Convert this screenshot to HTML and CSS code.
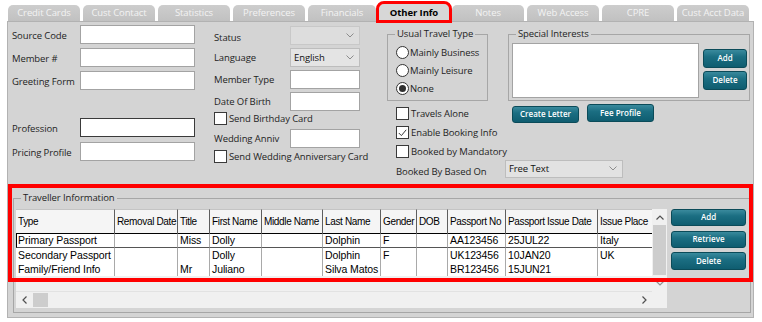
FILE: index.html
```html
<!DOCTYPE html>
<html>
<head>
<meta charset="utf-8">
<title>Other Info</title>
<link rel="stylesheet" href="styles.css">
</head>
<body>
<div class="app">
  <div class="tabs">
    <div class="tab">Credit Cards</div>
    <div class="tab">Cust Contact</div>
    <div class="tab">Statistics</div>
    <div class="tab">Preferences</div>
    <div class="tab narrow">Financials</div>
    <div class="tab active">Other Info</div>
    <div class="tab">Notes</div>
    <div class="tab">Web Access</div>
    <div class="tab">CPRE</div>
    <div class="tab">Cust Acct Data</div>
  </div>

  <div class="panel">
    <div class="upper">
      <div class="col-left">
        <div class="frow"><span class="lbl">Source Code</span><div class="inp"></div></div>
        <div class="frow"><span class="lbl">Member #</span><div class="inp"></div></div>
        <div class="frow"><span class="lbl">Greeting Form</span><div class="inp"></div></div>
        <div class="frow sep"><span class="lbl">Profession</span><div class="inp focus"></div></div>
        <div class="frow sep2"><span class="lbl">Pricing Profile</span><div class="inp"></div></div>
      </div>

      <div class="col-mid">
        <div class="mrow first"><span class="mlbl low">Status</span>
          <div class="sel disabled"><span></span><svg class="chev" width="8" height="5" viewBox="0 0 8 5"><polyline points="0.5,0.5 4,4 7.5,0.5" fill="none" stroke="#8c8c8c" stroke-width="1"/></svg></div>
        </div>
        <div class="mrow"><span class="mlbl">Language</span>
          <div class="sel"><span>English</span><svg class="chev" width="8" height="5" viewBox="0 0 8 5"><polyline points="0.5,0.5 4,4 7.5,0.5" fill="none" stroke="#8c8c8c" stroke-width="1"/></svg></div>
        </div>
        <div class="mrow"><span class="mlbl">Member Type</span><div class="inp small"></div></div>
        <div class="mrow"><span class="mlbl">Date Of Birth</span><div class="inp small"></div></div>
        <div class="crow c1"><span class="cb"></span>Send Birthday Card</div>
        <div class="mrow wed"><span class="mlbl">Wedding Anniv</span><div class="inp small"></div></div>
        <div class="crow c2"><span class="cb"></span>Send Wedding Anniversary Card</div>
      </div>

      <div class="col-right">
        <div class="fs-row">
          <fieldset class="grp utt">
            <legend>Usual Travel Type</legend>
            <div class="utt-body">
              <div class="rad"><span class="rb"></span>Mainly Business</div>
              <div class="rad"><span class="rb"></span>Mainly Leisure</div>
              <div class="rad"><span class="rb on"></span>None</div>
            </div>
          </fieldset>
          <fieldset class="grp si">
            <legend>Special Interests</legend>
            <div class="si-body">
              <div class="ta"></div>
              <div class="si-btns">
                <button class="btn si-add">Add</button>
                <button class="btn si-del">Delete</button>
              </div>
            </div>
          </fieldset>
        </div>
        <div class="rowA">
          <div class="checks">
            <div class="crow"><span class="cb"></span>Travels Alone</div>
            <div class="crow"><span class="cb"><svg width="9" height="8" viewBox="0 0 9 8"><polyline points="0.8,4 3.4,6.6 8.2,0.8" fill="none" stroke="#3a3a3a" stroke-width="1"/></svg></span>Enable Booking Info</div>
            <div class="crow"><span class="cb"></span>Booked by Mandatory</div>
          </div>
          <button class="btn create">Create Letter</button>
          <button class="btn fee">Fee Profile</button>
        </div>
        <div class="rowB">
          <span class="blbl">Booked By Based On</span>
          <div class="sel wide"><span>Free Text</span><svg class="chev" width="8" height="5" viewBox="0 0 8 5"><polyline points="0.5,0.5 4,4 7.5,0.5" fill="none" stroke="#8c8c8c" stroke-width="1"/></svg></div>
        </div>
      </div>
    </div>

    <fieldset class="grp trav">
      <legend>Traveller Information</legend>
      <div class="trav-body">
        <div class="grid">
          <div class="tarea">
            <table>
              <colgroup>
                <col class="w99"><col class="w63"><col class="w32"><col class="w52"><col class="w61"><col class="w58"><col class="w36"><col class="w31"><col class="w58"><col class="w92"><col class="w54">
              </colgroup>
              <thead>
                <tr><th>Type</th><th>Removal Date</th><th>Title</th><th>First Name</th><th>Middle Name</th><th>Last Name</th><th>Gender</th><th>DOB</th><th>Passport No</th><th>Passport Issue Date</th><th>Issue Place</th></tr>
              </thead>
              <tbody>
                <tr class="cur"><td>Primary Passport</td><td></td><td>Miss</td><td>Dolly</td><td></td><td>Dolphin</td><td>F</td><td></td><td>AA123456</td><td>25JUL22</td><td>Italy</td></tr>
                <tr><td>Secondary Passport</td><td></td><td></td><td>Dolly</td><td></td><td>Dolphin</td><td>F</td><td></td><td>UK123456</td><td>10JAN20</td><td>UK</td></tr>
                <tr><td>Family/Friend Info</td><td></td><td>Mr</td><td>Juliano</td><td></td><td>Silva Matos</td><td></td><td></td><td>BR123456</td><td>15JUN21</td><td></td></tr>
              </tbody>
            </table>
          </div>
          <div class="vsb">
            <div class="arr"><svg width="8" height="5" viewBox="0 0 8 5"><polyline points="0.5,4.5 4,1 7.5,4.5" fill="none" stroke="#505050" stroke-width="1.2"/></svg></div>
            <div class="vthumb"></div>
            <div class="arr"><svg width="8" height="5" viewBox="0 0 8 5"><polyline points="0.5,0.5 4,4 7.5,0.5" fill="none" stroke="#909090" stroke-width="1.2"/></svg></div>
          </div>
          <div class="hsb">
            <div class="harr"><svg width="5" height="8" viewBox="0 0 5 8"><polyline points="4.5,0.5 1,4 4.5,7.5" fill="none" stroke="#505050" stroke-width="1.2"/></svg></div>
            <div class="hthumb"></div>
            <div class="hspace"></div>
            <div class="harr"><svg width="5" height="8" viewBox="0 0 5 8"><polyline points="0.5,0.5 4,4 0.5,7.5" fill="none" stroke="#505050" stroke-width="1.2"/></svg></div>
          </div>
          <div class="corner"></div>
        </div>
        <div class="trav-btns">
          <button class="btn tb-add">Add</button>
          <button class="btn tb-ret">Retrieve</button>
          <button class="btn tb-del">Delete</button>
        </div>
      </div>
    </fieldset>
  </div>

  <div class="mark"></div>
</div>
</body>
</html>
```

FILE: styles.css
```css
* { box-sizing: border-box; }
html, body { margin: 0; background: #fff; }
body {
  font-family: "Open Sans", "Noto Sans", sans-serif;
  font-size: 9.5px;
  letter-spacing: -0.1px;
  color: #1e1e1e;
}
.app { position: relative; width: 762px; height: 322px; }

/* tabs */
.tabs { display: flex; gap: 3px; padding: 5px 0 0 8px; height: 21px; }
.tab {
  flex: none; width: 72px; height: 16px;
  background: linear-gradient(#cdcdcd, #c1c1c1);
  color: #f3f3f3;
  border-radius: 5px 5px 0 0;
  text-align: center; line-height: 16px; white-space: nowrap;
}
.tab.narrow { width: 68px; }
.tab.active {
  width: 70px; height: 16px; margin-top: -1px;
  background: #d7d7d7; color: #000; font-weight: 700; line-height: 17px;
  outline: 3px solid #ff0000;
}

/* panel */
.panel {
  margin-left: 7px; width: 747px; height: 297px;
  border: 1px solid #b2b2b2; background: #d4d4d4;
}
.upper { display: flex; height: 170px; padding: 3px 0 0 4px; }

.col-left { width: 183px; flex: none; }
.frow { display: flex; align-items: center; height: 19px; margin-bottom: 4px; }
.frow .lbl { width: 68px; flex: none; white-space: nowrap; padding-top: 1px; }
.frow.sep { margin-top: 28px; }
.frow.sep2 { margin-top: 5px; }
.inp { width: 115px; height: 19px; background: #fff; border: 1px solid #a3a3a3; }
.inp.focus { border-color: #3a3a3a; }
.inp.small { width: 70px; }

.col-mid { width: 154px; margin-left: 19px; flex: none; }
.mrow { display: flex; align-items: center; height: 19px; margin-top: 3px; }
.mrow.first { margin-top: 1px; }
.mrow.wed { margin-top: 4px; }
.mlbl { width: 76px; flex: none; white-space: nowrap; }
.mlbl.low { padding-top: 4px; }
.sel {
  width: 70px; height: 19px; flex: none;
  display: flex; align-items: center; justify-content: space-between;
  padding: 0 5px 0 3px;
  background: #e4e4e4; border: 1px solid #bdbdbd; color: #111;
}
.sel.disabled { background: #dddddd; border-color: #c8c8c8; }
.sel.wide { width: 118px; height: 18px; background: #e2e2e2; }
.chev { flex: none; }

.crow { display: flex; align-items: center; height: 13px; white-space: nowrap; }
.crow.c1 { margin-top: 1px; }
.crow.c2 { margin-top: 2px; }
.cb {
  width: 13px; height: 13px; flex: none; margin-right: 2px;
  border: 1px solid #3a3a3a; background: #fff;
  display: flex; align-items: center; justify-content: center;
}

.col-right { width: 362px; margin-left: 19px; flex: none; }
.fs-row { display: flex; gap: 20px; margin-top: 3px; }

fieldset.grp {
  margin: 0; padding: 0; min-width: 0;
  border: 1px solid #a6a6a6;
}
fieldset.grp legend {
  padding: 0 2px; margin-left: 7px;
  font-size: 9.5px; line-height: 12px; color: #1e1e1e; white-space: nowrap;
}
.utt { width: 101px; height: 73px; flex: none; }
.utt-body { padding: 6px 0 0 8px; }
.rad { display: flex; align-items: center; height: 13px; margin-bottom: 5px; white-space: nowrap; }
.rb {
  width: 13px; height: 13px; flex: none; margin-right: 1px;
  border: 1px solid #333; border-radius: 50%; background: #fff;
  display: flex; align-items: center; justify-content: center;
}
.rb.on::after { content: ""; width: 7px; height: 7px; border-radius: 50%; background: #2f2f2f; }

.si { width: 242px; height: 73px; flex: none; }
.si-body { display: flex; padding: 3px 0 0 3px; }
.ta { width: 187px; height: 55px; background: #fff; border: 1px solid #a3a3a3; flex: none; }
.si-btns { margin-left: 4px; }
.si-add { width: 44px; height: 19px; margin-top: 6px; }
.si-del { width: 44px; height: 19px; margin-top: 3px; }

.btn {
  display: flex; align-items: center; justify-content: center;
  padding: 0 0 1px; margin-left: 0; margin-right: 0;
  font-family: "Open Sans", "Noto Sans", sans-serif;
  font-size: 8px; font-weight: 600; color: #fff; line-height: 1; letter-spacing: 0;
  background: linear-gradient(#3a8a9d 0%, #1b6e82 40%, #0f5d70 100%);
  border: 1px solid #0b4b59; border-radius: 3px;
  white-space: nowrap;
}

.rowA { display: flex; align-items: flex-start; }
.checks { width: 116px; margin-left: 9px; padding-top: 6px; flex: none; }
.checks .crow { margin-bottom: 6px; }
.create { width: 67px; height: 17px; margin-top: 5px; }
.fee { width: 67px; height: 18px; margin-top: 3px; margin-left: 8px; }
.rowB { display: flex; align-items: center; margin: -5px 0 0 9px; }
.blbl { width: 109px; flex: none; padding-top: 6px; white-space: nowrap; }

/* traveller */
fieldset.trav { margin-left: 5px; width: 738px; height: 121px; }
.trav-body { display: flex; padding: 5px 0 0 2px; }
.grid {
  display: grid; flex: none;
  grid-template-columns: 636px 15px; grid-template-rows: 82px 17px;
  width: 651px; height: 99px; background: #f0f0f0;
}
.tarea { overflow: hidden; background: #f0f0f0; }
table {
  border-collapse: separate; border-spacing: 0; table-layout: fixed; width: 636px;
  font-family: "Liberation Sans", Arial, sans-serif; font-size: 10.5px; letter-spacing: -0.1px; color: #000;
}
.w99 { width: 99px; } .w63 { width: 63px; } .w32 { width: 32px; } .w52 { width: 52px; }
.w61 { width: 61px; } .w58 { width: 58px; } .w36 { width: 36px; } .w31 { width: 31px; }
.w92 { width: 92px; } .w54 { width: 54px; }
th {
  height: 24px; padding: 0 0 0 2px; text-align: left; font-weight: 400;
  font-size: 10px; letter-spacing: -0.35px;
  background: #f5f5f5; border-right: 1px solid #5e5e5e; border-top: 1px solid #c4c4c4;
  white-space: nowrap; overflow: hidden;
}
th:last-child { border-right: none; }
td {
  height: 14px; line-height: 13px; padding: 0 2px; background: #fff;
  border-right: 1px solid #a9a9a9; white-space: nowrap; overflow: hidden;
}
td:last-child { border-right: none; }
tr.cur td { height: 15px; border-top: 1px solid #000; border-bottom: 1px solid #555; }
tr.cur td:first-child { border-left: 1px solid #000; padding-left: 1px; }

.vsb { display: flex; flex-direction: column; background: #f0f0f0; }
.arr { height: 16px; display: flex; align-items: center; justify-content: center; }
.vthumb { width: 13px; height: 50px; margin: 0 auto; background: #cdcdcd; }
.vsb .arr:last-child { margin-top: auto; }
.hsb { display: flex; align-items: center; background: #f0f0f0; border-top: 1px solid #e2e2e2; }
.harr { width: 16px; height: 16px; flex: none; display: flex; align-items: center; justify-content: center; }
.hthumb { width: 15px; height: 14px; margin-left: 1px; background: #cdcdcd; flex: none; }
.hspace { flex: 1; }
.corner { background: #f0f0f0; }

.trav-btns { margin-left: 4px; }
.tb-add { width: 75px; height: 17px; }
.tb-ret { width: 75px; height: 17px; margin-top: 5px; }
.tb-del { width: 75px; height: 18px; margin-top: 4px; }

/* annotation overlay */
.mark {
  position: absolute; left: 8px; top: 184px; width: 745px; height: 98px;
  border: 4px solid #ff0000; pointer-events: none;
}
```
